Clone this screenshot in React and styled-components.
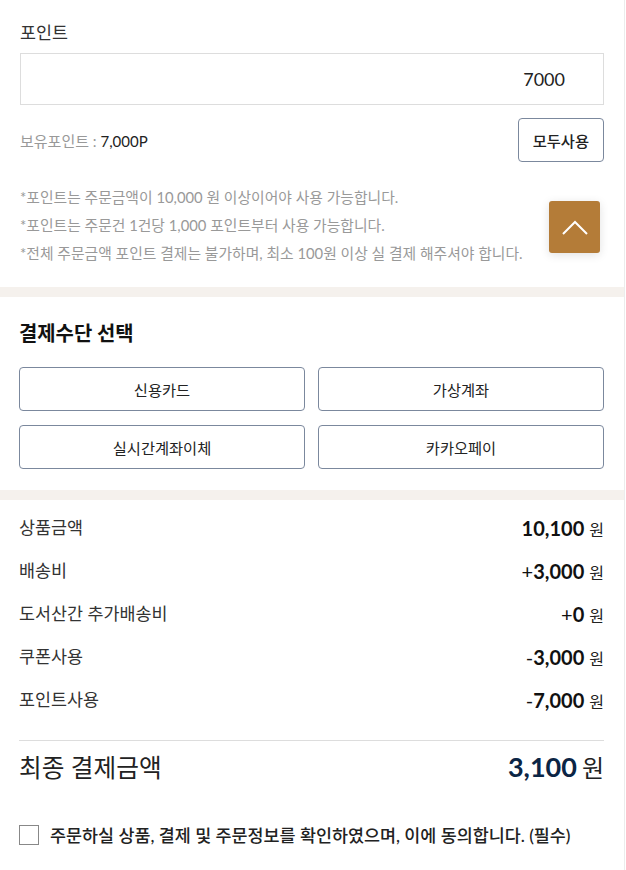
import React, { useState } from 'react';
import styled, { createGlobalStyle } from 'styled-components';

const GlobalStyle = createGlobalStyle`
  body {
    margin: 0;
    background: #fff;
    font-family: Lato, "Noto Sans CJK KR", sans-serif;
    color: #222;
  }
  * {
    box-sizing: border-box;
  }
`;

const Page = styled.div`
  width: 625px;
  border-right: 1px solid #ececec;
  min-height: 870px;
`;

const Section = styled.section`
  padding: ${(p) => p.$pad || '0 20px'};
`;

const Band = styled.div`
  height: 10px;
  background: #f5f1ed;
`;

const Label = styled.div`
  font-size: 17.4px;
  line-height: 24px;
  color: #333;
  margin-bottom: 8px;
`;

const PointInput = styled.input`
  display: block;
  width: 100%;
  height: 52px;
  border: 1px solid #ddd;
  padding: 0 38px 0 14px;
  text-align: right;
  font-family: Lato, "Noto Sans CJK KR", sans-serif;
  font-size: 18px;
  color: #222;
  outline: none;
`;

const HoldRow = styled.div`
  display: flex;
  justify-content: space-between;
  align-items: center;
  margin-top: 13px;
`;

const Hold = styled.div`
  font-size: 15px;
  color: #999;
  span {
    color: #222;
  }
`;

const OutlineButton = styled.button`
  height: 44px;
  padding: 0 ${(p) => (p.$wide ? '0' : '14px')};
  width: ${(p) => (p.$wide ? '100%' : 'auto')};
  background: #fff;
  border: 1px solid #7b889d;
  border-radius: 4px;
  font-family: Lato, "Noto Sans CJK KR", sans-serif;
  font-size: 15.3px;
  font-weight: ${(p) => (p.$wide ? 400 : 500)};
  color: #222;
  cursor: pointer;
`;

const Notes = styled.ul`
  list-style: none;
  margin: 21px 0 0;
  padding: 0;
  li {
    font-size: 14.8px;
    line-height: 28px;
    color: #999;
  }
`;

const Title = styled.h2`
  margin: 0 0 21px;
  font-size: 19.9px;
  line-height: 26px;
  font-weight: 700;
  color: #111;
`;

const MethodGrid = styled.div`
  display: grid;
  grid-template-columns: 1fr 1fr;
  column-gap: 13px;
  row-gap: 14px;
`;

const SumRow = styled.div`
  display: flex;
  justify-content: space-between;
  align-items: center;
  height: 43px;
`;

const SumLabel = styled.div`
  font-size: 17.4px;
  color: #333;
  margin-top: -4px;
`;

const Amount = styled.div`
  display: flex;
  align-items: baseline;
  color: ${(p) => (p.$final ? '#0b2545' : '#111')};
  b {
    font-size: ${(p) => (p.$final ? '27px' : '20px')};
    font-weight: 700;
  }
  i {
    font-style: normal;
    font-weight: 400;
    font-size: 20px;
  }
  small {
    margin-left: 5px;
    font-size: ${(p) => (p.$final ? '24px' : '16px')};
    color: #222;
  }
`;

const Divider = styled.hr`
  margin: 18px 0 0;
  border: 0;
  border-top: 1px solid #ddd;
`;

const FinalRow = styled.div`
  display: flex;
  justify-content: space-between;
  align-items: center;
  height: 50px;
`;

const FinalLabel = styled.div`
  font-size: 24.7px;
  color: #222;
`;

const Agree = styled.label`
  display: flex;
  align-items: center;
  gap: 11px;
  margin-top: 31px;
  font-size: 17.4px;
  font-weight: 500;
  color: #222;
  cursor: pointer;
`;

const Box = styled.span`
  flex: none;
  width: 20px;
  height: 20px;
  border: 1px solid #888;
  background: ${(p) => (p.$on ? '#0b2545' : '#fff')};
`;

const TopButton = styled.button`
  position: fixed;
  top: 201px;
  left: 549px;
  width: 51px;
  height: 52px;
  border: 0;
  border-radius: 3px;
  background: #b47c38;
  box-shadow: 0 2px 10px rgba(0, 0, 0, 0.12);
  display: flex;
  align-items: center;
  justify-content: center;
  cursor: pointer;
`;

const summary = [
  { label: '상품금액', sign: '', value: '10,100' },
  { label: '배송비', sign: '+', value: '3,000' },
  { label: '도서산간 추가배송비', sign: '+', value: '0' },
  { label: '쿠폰사용', sign: '-', value: '3,000' },
  { label: '포인트사용', sign: '-', value: '7,000' },
];

const methods = ['신용카드', '가상계좌', '실시간계좌이체', '카카오페이'];

const App = () => {
  const [point, setPoint] = useState('7000');
  const [agree, setAgree] = useState(false);

  return (
    <>
      <GlobalStyle />
      <Page>
        <Section $pad="21px 20px 20px">
          <Label>포인트</Label>
          <PointInput value={point} onChange={(e) => setPoint(e.target.value)} />
          <HoldRow>
            <Hold>
              보유포인트 : <span>7,000P</span>
            </Hold>
            <OutlineButton onClick={() => setPoint('7000')}>모두사용</OutlineButton>
          </HoldRow>
          <Notes>
            <li>*포인트는 주문금액이 10,000 원 이상이어야 사용 가능합니다.</li>
            <li>*포인트는 주문건 1건당 1,000 포인트부터 사용 가능합니다.</li>
            <li>*전체 주문금액 포인트 결제는 불가하며, 최소 100원 이상 실 결제 해주셔야 합니다.</li>
          </Notes>
        </Section>
        <Band />
        <Section $pad="23px 20px 21px 19px">
          <Title>결제수단 선택</Title>
          <MethodGrid>
            {methods.map((m) => (
              <OutlineButton key={m} $wide>
                {m}
              </OutlineButton>
            ))}
          </MethodGrid>
        </Section>
        <Band />
        <Section $pad="7px 20px 0 19px">
          {summary.map((row) => (
            <SumRow key={row.label}>
              <SumLabel>{row.label}</SumLabel>
              <Amount>
                {row.sign && <i>{row.sign}</i>}
                <b>{row.value}</b>
                <small>원</small>
              </Amount>
            </SumRow>
          ))}
          <Divider />
          <FinalRow>
            <FinalLabel>최종 결제금액</FinalLabel>
            <Amount $final>
              <b>3,100</b>
              <small>원</small>
            </Amount>
          </FinalRow>
          <Agree onClick={() => setAgree(!agree)}>
            <Box $on={agree} />
            주문하실 상품, 결제 및 주문정보를 확인하였으며, 이에 동의합니다. (필수)
          </Agree>
        </Section>
      </Page>
      <TopButton aria-label="top">
        <svg width="26" height="16" viewBox="0 0 26 16">
          <polyline points="1,15 13,3 25,15" fill="none" stroke="#fff" strokeWidth="2" />
        </svg>
      </TopButton>
    </>
  );
};

export default App;
